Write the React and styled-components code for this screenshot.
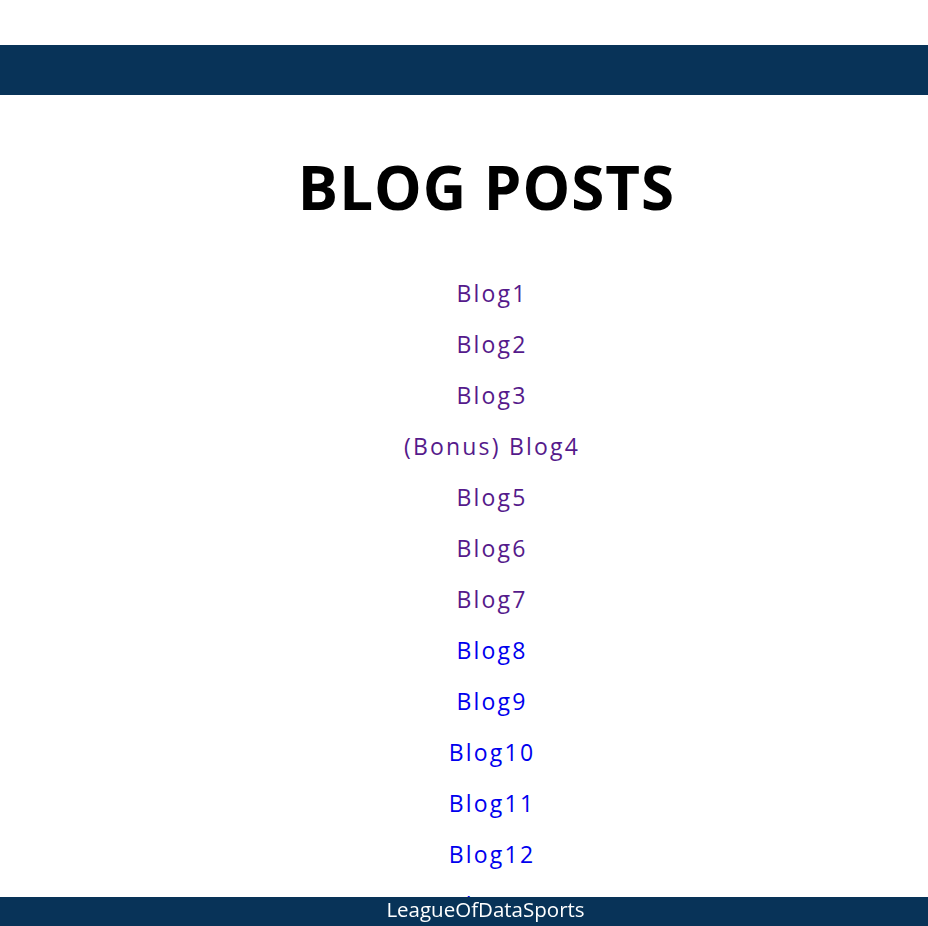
import React from "react";
import styled, { createGlobalStyle } from "styled-components";

const Global = createGlobalStyle`
  html, body { margin: 0; padding: 0; background: #fff; }
  html { scrollbar-width: none; }
  html::-webkit-scrollbar { display: none; }
  body { font-family: "Open Sans", "Noto Sans", sans-serif; }
`;

const Page = styled.div`
  height: 100vh;
  overflow: hidden;
  padding-top: 45px;
  box-sizing: border-box;
`;

const TopBar = styled.header`
  height: 50px;
  background: #083358;
`;

const Title = styled.h1`
  margin: 52px 0 0;
  padding-left: 45px;
  text-align: center;
  font-size: 60px;
  font-weight: 700;
  line-height: 80px;
  letter-spacing: 1px;
  color: #000;
`;

const List = styled.nav`
  display: flex;
  flex-direction: column;
  align-items: center;
  margin-top: 41px;
  padding-left: 56px;
`;

const Item = styled.a`
  display: block;
  height: 51px;
  line-height: 51px;
  font-size: 23px;
  letter-spacing: 2.2px;
  text-decoration: none;
  color: ${(p) => (p.$visited ? "#551A8B" : "#0000EE")};
`;

const Footer = styled.footer`
  position: fixed;
  z-index: 1;
  left: 0;
  right: 0;
  bottom: 0;
  height: 29px;
  background: #083358;
  color: #fff;
  text-align: center;
  padding-left: 43px;
  font-size: 20.5px;
  line-height: 24px;
`;

const posts = [
  ["Blog1", true],
  ["Blog2", true],
  ["Blog3", true],
  ["(Bonus) Blog4", true],
  ["Blog5", true],
  ["Blog6", true],
  ["Blog7", true],
  ["Blog8", false],
  ["Blog9", false],
  ["Blog10", false],
  ["Blog11", false],
  ["Blog12", false],
  ["Blog13", false],
];

export default function App() {
  return (
    <Page>
      <Global />
      <TopBar />
      <Title>BLOG POSTS</Title>
      <List>
        {posts.map(([t, v]) => (
          <Item key={t} href="#" $visited={v}>
            {t}
          </Item>
        ))}
      </List>
      <Footer>LeagueOfDataSports</Footer>
    </Page>
  );
}
